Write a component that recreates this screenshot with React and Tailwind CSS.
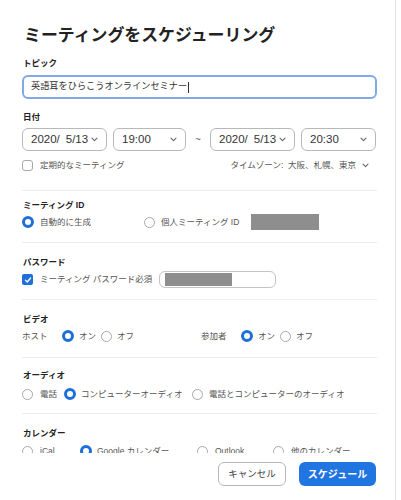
import React from "react";

const Label = ({ className = "", children }) => (
  <div className={`text-[8.5px] font-bold leading-[14px] ml-px text-[#222] ${className}`}>{children}</div>
);

const Radio = ({ on }) =>
  on ? (
    <span className="w-[12px] h-[12px] rounded-full border-[3px] border-[#1f6fd8] bg-white shrink-0" />
  ) : (
    <span className="w-[11px] h-[11px] rounded-full border border-[#a8a8a8] bg-white shrink-0" />
  );

const Chevron = ({ className = "" }) => (
  <svg width="7" height="5" viewBox="0 0 7 5" className={className}>
    <path d="M1 1.2 L3.5 3.6 L6 1.2" fill="none" stroke="#666" strokeWidth="1.1" strokeLinecap="round" strokeLinejoin="round" />
  </svg>
);

const Select = ({ w, children, className = "" }) => (
  <div
    className={`${w} ${className} h-full rounded-[6px] border border-[#b8b8b8] flex items-center justify-between pl-[8px] pr-[8px] text-[11.5px] text-[#333]`}
  >
    <span>{children}</span>
    <Chevron />
  </div>
);

const Divider = ({ className = "" }) => <div className={`h-px bg-[#ededed] shrink-0 ${className}`} />;

const Txt = ({ className = "", children }) => (
  <span className={`text-[8.5px] text-[#555] whitespace-nowrap ${className}`}>{children}</span>
);

export default function App() {
  return (
    <div className="w-[401px] h-[500px] bg-white flex overflow-hidden font-['Liberation_Sans','Noto_Sans_CJK_JP',sans-serif] text-[#333]">
      <div className="w-[395px] flex flex-col shrink-0">
        <div className="h-[453px] overflow-hidden pl-[22px] pr-[18px] flex flex-col shrink-0">
          <h1 className="mt-[25px] ml-[2px] text-[16.9px] leading-[22px] font-bold text-[#222] whitespace-nowrap">
            ミーティングをスケジューリング
          </h1>

          <Label className="mt-[9px]">トピック</Label>
          <div className="mt-[5px] h-[24px] shrink-0 rounded-[6px] border-2 border-[#80aae6] flex items-center pl-[7px] text-[9.2px] text-[#333]">
            英語耳をひらこうオンラインセミナー
            <span className="w-px h-[11px] bg-[#333] ml-px" />
          </div>

          <Label className="mt-[11px]">日付</Label>
          <div className="mt-[4px] h-[23px] flex items-center shrink-0">
            <Select w="w-[85px]">
              2020/<span className="ml-[6px]">5/13</span>
            </Select>
            <Select w="w-[73px]" className="ml-[6px]">19:00</Select>
            <span className="w-[24px] text-center text-[10px] text-[#666]">~</span>
            <Select w="w-[85px]">
              2020/<span className="ml-[6px]">5/13</span>
            </Select>
            <Select w="w-[75px]" className="ml-[6px]">20:30</Select>
          </div>

          <div className="mt-[7px] h-[14px] flex items-center justify-between shrink-0">
            <div className="flex items-center">
              <span className="w-[11px] h-[11px] rounded-[3px] border border-[#a8a8a8] bg-white" />
              <Txt className="ml-[7px]">定期的なミーティング</Txt>
            </div>
            <div className="flex items-center pr-[8px]">
              <Txt>タイムゾーン:&nbsp;&nbsp;大阪、札幌、東京</Txt>
              <Chevron className="ml-[6px]" />
            </div>
          </div>

          <Divider className="mt-[18px]" />

          <Label className="mt-[7px]">ミーティング ID</Label>
          <div className="mt-[2px] h-[16px] flex items-center shrink-0">
            <Radio on />
            <Txt className="ml-[6px] w-[104px]">自動的に生成</Txt>
            <Radio />
            <Txt className="ml-[6px]">個人ミーティング ID</Txt>
            <span className="ml-[12px] w-[68px] h-[16px] bg-[#8e8e8e]" />
          </div>

          <Divider className="mt-[12px]" />

          <Label className="mt-[12px]">パスワード</Label>
          <div className="mt-[2px] h-[17px] flex items-center shrink-0">
            <span className="w-[11px] h-[11px] rounded-[2px] bg-[#1f6fd8] flex items-center justify-center">
              <svg width="8" height="8" viewBox="0 0 8 8">
                <path d="M1.5 4.2 L3.3 6 L6.6 2" fill="none" stroke="white" strokeWidth="1.3" strokeLinecap="round" strokeLinejoin="round" />
              </svg>
            </span>
            <Txt className="ml-[7px]">ミーティング パスワード必須</Txt>
            <div className="ml-[7px] w-[117px] h-[17px] rounded-[6px] border border-[#c4c4c4] flex items-center pl-[5px]">
              <span className="w-[67px] h-[13px] bg-[#8e8e8e]" />
            </div>
          </div>

          <Divider className="mt-[11px]" />

          <Label className="mt-[12px]">ビデオ</Label>
          <div className="mt-[2px] h-[16px] flex items-center shrink-0">
            <Txt className="w-[40px]">ホスト</Txt>
            <Radio on />
            <Txt className="ml-[5px] w-[22px]">オン</Txt>
            <Radio />
            <Txt className="ml-[5px] w-[84px]">オフ</Txt>
            <Txt className="w-[40px]">参加者</Txt>
            <Radio on />
            <Txt className="ml-[5px] w-[22px]">オン</Txt>
            <Radio />
            <Txt className="ml-[5px]">オフ</Txt>
          </div>

          <Divider className="mt-[13px]" />

          <Label className="mt-[10px]">オーディオ</Label>
          <div className="mt-[4px] h-[16px] flex items-center shrink-0">
            <Radio />
            <Txt className="ml-[7px] w-[24px]">電話</Txt>
            <Radio on />
            <Txt className="ml-[5px] w-[111px]">コンピューターオーディオ</Txt>
            <Radio />
            <Txt className="ml-[6px]">電話とコンピューターのオーディオ</Txt>
          </div>

          <Divider className="mt-[11px]" />

          <Label className="mt-[12px]">カレンダー</Label>
          <div className="mt-[3px] h-[16px] flex items-center shrink-0">
            <Radio />
            <Txt className="ml-[7px] w-[40px]">iCal</Txt>
            <Radio on />
            <Txt className="ml-[5px] w-[100px]">Google カレンダー</Txt>
            <Radio />
            <Txt className="ml-[7px] w-[58px]">Outlook</Txt>
            <Radio />
            <Txt className="ml-[7px]">他のカレンダー</Txt>
          </div>
        </div>

        <div className="mt-[9px] flex justify-end pr-[19px] gap-[13px]">
          <button className="w-[68px] h-[24px] rounded-[6px] border border-[#b8b8b8] bg-white text-[9.5px] text-[#444]">
            キャンセル
          </button>
          <button className="w-[77px] h-[24px] rounded-[6px] bg-[#2175e0] text-[10px] font-bold text-white">
            スケジュール
          </button>
        </div>
      </div>
      <div className="w-px bg-[#e3e3e3] shrink-0" />
      <div className="flex-1 bg-white" />
    </div>
  );
}
